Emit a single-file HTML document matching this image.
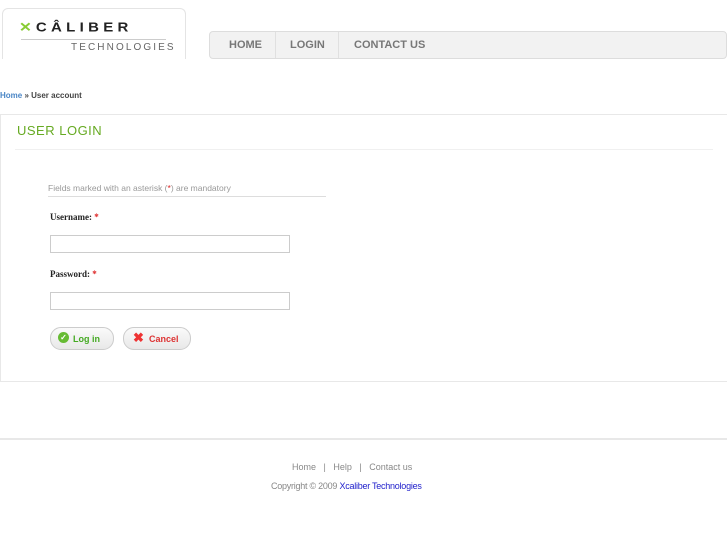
<!DOCTYPE html>
<html><head><style>
body{margin:0;width:727px;height:545px;background:#fff;font-family:"Liberation Sans",sans-serif;position:relative;overflow:hidden}
.abs{position:absolute}
.logo{left:2px;top:8px;width:182px;height:50px;border:1px solid #e4e4e4;border-bottom:none;border-radius:6px 6px 0 0}
.nav{left:209px;top:31px;width:516px;height:26px;background:#f2f2f2;border:1px solid #ddd;border-radius:4px}
.nav span{position:absolute;top:7px;font-size:11px;font-weight:bold;color:#777}
.sep{position:absolute;top:0;width:1px;height:26px;background:#e0e0e0}
.box{left:0;top:114px;width:726px;height:266px;border:1px solid #e8e8e8}
input{position:absolute;width:238px;height:16px;border:1px solid #ccc;margin:0;padding:0}
.btn{position:absolute;top:327px;height:21px;border:1px solid #ccc;border-radius:11px;background:linear-gradient(#fafafa,#e8e8e8);font-size:9px;font-weight:bold}
</style></head><body>
<div class="abs logo">
<div class="abs" style="left:16px;top:9px;font-size:15px;letter-spacing:4.3px;font-weight:bold;color:#222;transform:scaleY(.85)"><span style="color:#8c3">✕</span>CÂLIBER</div>
<div class="abs" style="left:18px;top:30px;width:145px;height:1px;background:#ccc"></div>
<div class="abs" style="left:68px;top:33px;font-size:10px;letter-spacing:2.1px;color:#666">TECHNOLOGIES</div>
</div>
<div class="abs nav">
<span style="left:19px">HOME</span><div class="sep" style="left:65px"></div>
<span style="left:80px">LOGIN</span><div class="sep" style="left:128px"></div>
<span style="left:144px">CONTACT US</span>
</div>
<div class="abs" style="left:0;top:91px;font-size:8px;font-weight:bold;color:#444"><span style="color:#4a86c6">Home</span> » User account</div>
<div class="abs box">
<div class="abs" style="left:16px;top:8px;font-size:13px;color:#6a2;letter-spacing:.5px">USER LOGIN</div>
<div class="abs" style="left:14px;top:34px;width:698px;height:1px;background:#f0f0f0"></div>
<div class="abs" style="left:47px;top:68px;font-size:8.5px;color:#999">Fields marked with an asterisk (<span style="color:#d22">*</span>) are mandatory</div>
<div class="abs" style="left:47px;top:81px;width:278px;height:1px;background:#ddd"></div>
<div class="abs" style="left:49px;top:97px;font:bold 9px 'Liberation Serif',serif;color:#222">Username: <span style="color:#d22">*</span></div>
<input style="left:49px;top:120px">
<div class="abs" style="left:49px;top:154px;font:bold 9px 'Liberation Serif',serif;color:#222">Password: <span style="color:#d22">*</span></div>
<input style="left:49px;top:177px">
</div>
<div class="btn" style="left:50px;width:62px"><span class="abs" style="left:7px;top:4px;width:11px;height:11px;border-radius:50%;background:#6b3;color:#fff;font-size:8px;text-align:center;line-height:11px">✓</span><span class="abs" style="left:22px;top:6px;color:#4a2">Log in</span></div>
<div class="btn" style="left:123px;width:66px"><span class="abs" style="left:9px;top:2px;color:#e33;font-size:13px">✖</span><span class="abs" style="left:25px;top:6px;color:#d33">Cancel</span></div>
<div class="abs" style="left:0;top:438px;width:727px;height:2px;background:#e8e8e8"></div>
<div class="abs" style="left:292px;top:462px;font-size:9px;color:#888;white-space:nowrap">Home &nbsp; | &nbsp; Help &nbsp; | &nbsp; Contact us</div>
<div class="abs" style="left:271px;top:481px;font-size:9px;color:#888;letter-spacing:-.25px;white-space:nowrap">Copyright © 2009 <span style="color:#22c">Xcaliber Technologies</span></div>
</body></html>
